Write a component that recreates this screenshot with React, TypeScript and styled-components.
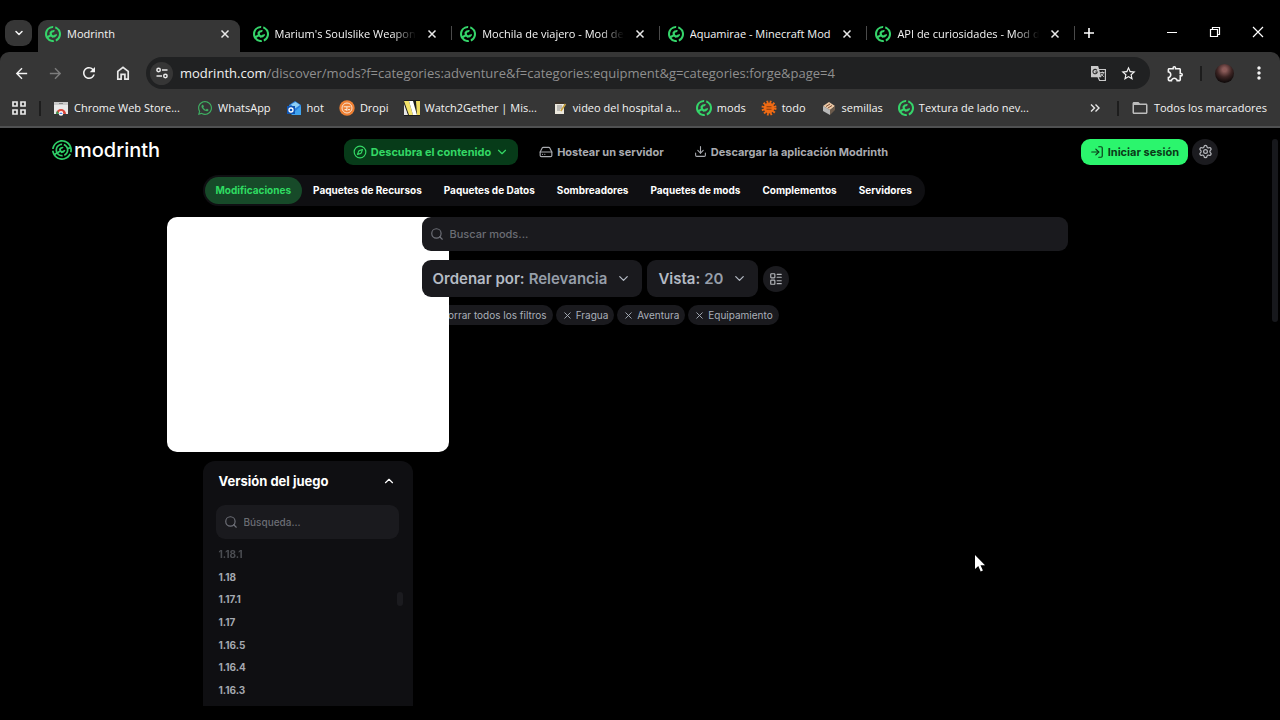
import React from "react";
import styled, { createGlobalStyle } from "styled-components";
import {
  ChevronDown,
  ChevronUp,
  Compass,
  Download,
  HardDrive,
  LayoutList,
  LogIn,
  Search,
  Settings,
  X,
} from "lucide-react";
import {
  MdArrowBack,
  MdArrowForward,
  MdRefresh,
  MdStarBorder,
  MdOutlineExtension,
  MdMoreVert,
  MdFolderOpen,
} from "react-icons/md";
import { FaWhatsapp } from "react-icons/fa";
import { SiModrinth } from "react-icons/si";

const GlobalStyle = createGlobalStyle`
  *, *::before, *::after { box-sizing: border-box; }
  body { margin: 0; background: #000; }
  button, input, select { font: inherit; color: inherit; }
  button { margin: 0; padding: 0; border: 0; background: none; cursor: pointer; }
  a { color: inherit; text-decoration: none; }
  svg { display: block; flex: none; }
  ul { list-style: none; margin: 0; padding: 0; }
`;

/* ---------- Browser window ---------- */

const Window = styled.div`
  display: flex;
  flex-direction: column;
  min-height: 100vh;
  background: #000;
`;

const Chrome = styled.div`
  font-family: "Open Sans", "Noto Sans", sans-serif;
  font-size: 11px;
  color: #f4f4f4;
`;

const TabStrip = styled.div`
  display: flex;
  align-items: flex-start;
  padding: 20px 0 0 5px;
  height: 52px;
`;

const TabSearch = styled.button`
  display: grid;
  place-items: center;
  flex: none;
  width: 27px;
  height: 26px;
  margin-right: 6px;
  border-radius: 9px;
  background: #363636;
`;

const Tabs = styled.div`
  display: flex;
  flex: 0 1 1038px;
  min-width: 0;
`;

const TabSlot = styled.div<{ $divider: boolean }>`
  display: flex;
  flex: 1 1 0;
  min-width: 0;
  &::after {
    content: "";
    flex: none;
    width: 1px;
    height: 14px;
    margin: 6px 1px 0 4px;
    background: ${(p) => (p.$divider ? "#4a4a4a" : "transparent")};
  }
`;

const TabBody = styled.div<{ $active: boolean }>`
  display: flex;
  flex: 1;
  align-items: center;
  gap: 6px;
  min-width: 0;
  height: 32px;
  padding: 0 9px 5px 7px;
  border-radius: 9px 9px 0 0;
  background: ${(p) => (p.$active ? "#363636" : "transparent")};
`;

const TabTitle = styled.span<{ $faded: boolean }>`
  flex: 1;
  min-width: 0;
  overflow: hidden;
  white-space: nowrap;
  line-height: 20px;
  mask-image: ${(p) =>
    p.$faded ? "linear-gradient(to right, #000 calc(100% - 28px), transparent calc(100% - 4px))" : "none"};
`;

const IconButton = styled.button<{ $size?: number }>`
  display: grid;
  place-items: center;
  flex: none;
  width: ${(p) => p.$size ?? 24}px;
  height: ${(p) => p.$size ?? 24}px;
`;

const WindowButtons = styled.div`
  display: flex;
  gap: 19px;
  margin-left: auto;
  padding-right: 10px;
`;

const Toolbar = styled.div`
  display: flex;
  align-items: center;
  height: 42px;
  padding: 0 9px;
  border-radius: 9px 9px 0 0;
  background: #363636;
`;

const NavButtons = styled.div`
  display: flex;
  gap: 10px;
  margin-right: 11px;
`;

const Omnibox = styled.div`
  display: flex;
  align-items: center;
  flex: 1;
  min-width: 0;
  height: 32px;
  padding: 0 10px 0 4px;
  border-radius: 16px;
  background: #202122;
`;

const SiteInfo = styled.button`
  display: grid;
  place-items: center;
  flex: none;
  width: 23px;
  height: 23px;
  margin-right: 7px;
  border-radius: 50%;
  background: #363636;
`;

const Url = styled.span`
  flex: 1;
  min-width: 0;
  overflow: hidden;
  white-space: nowrap;
  font-size: 13px;
  line-height: 20px;
  color: #8f8f8f;
  b { font-weight: 400; color: #f1f1f1; }
`;

const OmniboxActions = styled.div`
  display: flex;
  gap: 6px;
`;

const ToolbarActions = styled.div`
  display: flex;
  align-items: center;
  gap: 13px;
  margin-left: 13px;
`;

const Divider = styled.span`
  flex: none;
  width: 2px;
  height: 15px;
  background: #1d1d1d;
`;

const Avatar = styled.span`
  width: 19px;
  height: 19px;
  border-radius: 50%;
  background: radial-gradient(circle at 50% 30%, #8a5a58 0 12%, #3c2423 45%, #120c0c 75%);
`;

const Bookmarks = styled.div`
  display: flex;
  align-items: center;
  gap: 12px;
  height: 34px;
  padding: 0 13px 4px 11px;
  border-bottom: 2px solid #505152;
  background: #363636;
`;

const BookmarkList = styled.ul`
  display: flex;
  flex: 1;
  min-width: 0;
  gap: 15px;
`;

const Bookmark = styled.a<{ $elided?: boolean }>`
  display: flex;
  align-items: center;
  gap: 5px;
  min-width: ${(p) => (p.$elided ? 129 : 0)}px;
  white-space: nowrap;
  line-height: 20px;
`;

/* ---------- Modrinth page ---------- */

const Viewport = styled.div`
  display: flex;
  flex: 1;
  font-family: Inter, sans-serif;
  font-size: 11px;
  color: #b0bac5;
`;

const Page = styled.div`
  flex: 1;
  min-width: 0;
`;

const ScrollTrack = styled.div`
  flex: none;
  width: 10px;
  padding: 11px 2px;
`;

const ScrollThumb = styled.div`
  width: 6px;
  height: 183px;
  border-radius: 3px;
  background: #17181c;
`;

const Header = styled.header`
  display: flex;
  align-items: center;
  height: 47px;
  padding: 0 52px;
`;

const Brand = styled.a`
  display: flex;
  align-items: center;
  gap: 2px;
  padding-bottom: 4px;
  font-size: 20px;
  font-weight: 500;
  line-height: 24px;
  color: #fff;
`;

const SiteNav = styled.nav`
  display: flex;
  flex: 1;
  justify-content: center;
  gap: 12px;
`;

const NavItem = styled.button<{ $active?: boolean }>`
  display: flex;
  align-items: center;
  gap: 4px;
  height: 26px;
  padding: 0 9px;
  border-radius: 9px;
  font-weight: 700;
  white-space: nowrap;
  color: ${(p) => (p.$active ? "#34d765" : "#a9abb0")};
  background: ${(p) => (p.$active ? "#073b19" : "transparent")};
`;

const SignIn = styled.button`
  display: flex;
  align-items: center;
  gap: 4px;
  height: 26px;
  padding: 0 9px;
  margin-right: 4px;
  border-radius: 9px;
  font-weight: 700;
  white-space: nowrap;
  color: #0a3a18;
  background: #2bf56d;
`;

const RoundButton = styled.button`
  display: grid;
  place-items: center;
  flex: none;
  width: 26px;
  height: 26px;
  border-radius: 50%;
  color: #b4b6bb;
  background: #1b1b1f;
`;

const Content = styled.div`
  max-width: 865px;
  margin: 0 auto;
`;

const TypeNav = styled.nav`
  display: flex;
  width: fit-content;
  padding: 2px;
  border-radius: 16px;
  background: #0f0f12;
`;

const TypeLink = styled.a<{ $active?: boolean }>`
  padding: 0 11px;
  border-radius: 14px;
  font-size: 10px;
  font-weight: 700;
  line-height: 27px;
  white-space: nowrap;
  color: ${(p) => (p.$active ? "#2fdc62" : "#fff")};
  background: ${(p) => (p.$active ? "#174a29" : "transparent")};
`;

const Columns = styled.div`
  display: flex;
  gap: 9px;
  margin-top: 11px;
`;

const Sidebar = styled.aside`
  flex: none;
  width: 210px;
`;

/* The ad frame is wider than the sidebar and spills over both of its sides. */
const AdFrame = styled.div`
  position: relative;
  z-index: 1;
  height: 235px;
  margin: 0 -36px 9px;
  border-radius: 10px;
  background: #fff;
`;

const FilterCard = styled.section`
  padding: 0 14px 5px 13px;
  border-radius: 12px 12px 0 0;
  background: #0f0f12;
`;

const FilterToggle = styled.button`
  display: flex;
  align-items: center;
  justify-content: space-between;
  width: 100%;
  height: 44px;
  padding: 0 3px 4px;
  font-size: 13px;
  font-weight: 700;
  color: #fff;
`;

const SearchField = styled.label<{ $small?: boolean }>`
  position: relative;
  z-index: 2;
  display: flex;
  align-items: center;
  gap: 6px;
  height: 34px;
  padding: 0 8px;
  border-radius: 9px;
  font-size: ${(p) => (p.$small ? 10 : 11)}px;
  font-weight: 500;
  color: #6f7179;
  background: #1a1a1e;
  input {
    flex: 1;
    min-width: 0;
    padding: 0;
    border: 0;
    outline: 0;
    background: none;
  }
  input::placeholder { color: #6b6d74; opacity: 1; }
`;

const VersionArea = styled.div`
  display: flex;
  align-items: center;
  margin: 4px -4px 0 0;
`;

const VersionList = styled.ul`
  display: grid;
  grid-auto-rows: 1fr;
  flex: 1;
  height: 158px;
`;

const VersionButton = styled.button<{ $faded: boolean }>`
  display: flex;
  align-items: center;
  height: 100%;
  padding: 0 3px;
  font-size: 10px;
  font-weight: 700;
  color: #a4a8b0;
  opacity: ${(p) => (p.$faded ? 0.4 : 1)};
`;

const ListThumb = styled.div`
  width: 6px;
  height: 14px;
  margin-bottom: 46px;
  border-radius: 3px;
  background: #1b1b1f;
`;

const Results = styled.main`
  flex: 1;
  min-width: 0;
`;

const Controls = styled.div`
  position: relative;
  z-index: 2;
  display: flex;
  align-items: center;
  gap: 5px;
  width: fit-content;
  margin: 9px 0 8px;
`;

const SelectBox = styled.label`
  display: flex;
  align-items: center;
  gap: 4px;
  height: 37px;
  padding: 0 11px;
  border-radius: 9px;
  font-size: 15px;
  font-weight: 600;
  white-space: nowrap;
  color: #b4bac4;
  background: #1a1a1e;
  select {
    appearance: none;
    field-sizing: content;
    padding: 0;
    margin-right: 5px;
    border: 0;
    outline: 0;
    color: #969ea9;
    background: transparent;
  }
`;

const Chips = styled.div`
  display: flex;
  gap: 3px;
`;

const Chip = styled.button`
  display: flex;
  align-items: center;
  gap: 3px;
  height: 20px;
  padding: 0 6px;
  border-radius: 10px;
  font-size: 10px;
  white-space: nowrap;
  color: #aab0ba;
  background: #1a1a1e;
`;

const Pointer = styled.svg`
  position: absolute;
  left: 974px;
  top: 555px;
  z-index: 5;
  pointer-events: none;
`;

/* ---------- Icons ---------- */

const Favicon = () => <SiModrinth size={16} color="#35d46a" />;

const ModrinthLogo = () => (
  <svg width="20" height="20" viewBox="0 0 512 514" fill="#2fcf68">
    <path d="M503.16 323.56C514.55 281.47 515.32 235.91 503.2 190.76C466.57 54.23 326.04-26.8 189.33 9.78C83.81 38.02 11.39 128.07.69 230.47H43.99C54.29 147.33 113.74 74.73 199.75 51.71C306.05 23.26 415.13 80.67 453.17 181.38L411.03 192.65C391.64 145.8 352.57 111.45 306.3 96.82L298.56 140.66C335.09 154.13 364.72 184.5 375.56 224.91C391.36 283.8 361.94 344.14 308.56 369.17L320.09 412.16C390.25 383.21 432.4 310.3 422.43 235.14L464.41 223.91C468.91 252.62 467.35 281.16 460.55 308.07L503.16 323.56Z" />
    <path d="M321.99 504.22C185.27 540.8 44.75 459.77 8.11 323.24C3.84 307.31 1.17 291.33 0 275.46H43.27C44.36 287.37 46.47 299.35 49.68 311.29C53.04 323.8 57.45 335.75 62.79 347.07L101.38 323.92C98.13 316.42 95.39 308.6 93.21 300.47C69.17 210.87 122.41 118.77 212.13 94.76C229.13 90.21 246.23 88.44 262.93 89.15L255.19 133C244.73 133.05 234.11 134.42 223.53 137.25C157.31 154.98 118.01 222.95 135.75 289.09C136.85 293.16 138.13 297.13 139.59 300.99L188.94 271.38L174.07 231.95L220.67 184.08L279.57 171.39L296.62 192.38L269.47 219.88L245.79 227.33L228.87 244.72L237.16 267.79C237.16 267.79 253.95 285.63 253.98 285.64L277.7 279.33L294.58 260.79L331.44 249.12L342.42 273.82L304.39 320.45L240.66 340.63L212.08 308.81L162.26 338.7C187.8 367.78 226.2 383.93 266.01 380.56L277.54 423.55C218.13 431.41 160.1 406.82 124.05 361.64L85.64 384.68C136.25 451.17 223.84 484.11 309.61 461.16C371.35 444.64 419.4 402.56 445.42 349.38L488.06 364.88C457.17 431.16 398.22 483.82 321.99 504.22Z" />
  </svg>
);

const CloseIcon = () => (
  <svg width="10" height="10" viewBox="0 0 10 10" stroke="#e8e8e8" strokeWidth="1.5">
    <path d="M1.5 1.5l7 7M8.5 1.5l-7 7" />
  </svg>
);

const HomeIcon = () => (
  <svg width="16" height="16" viewBox="0 0 16 16" fill="none" stroke="#e8e8e8" strokeWidth="1.7">
    <path d="M2.8 6.4 8 2.3l5.2 4.1v7.7H9.9V9.4H6.1v4.7H2.8z" />
  </svg>
);

const TuneIcon = () => (
  <svg width="14" height="14" viewBox="0 0 14 14" fill="none" stroke="#e8e8e8" strokeWidth="1.5">
    <circle cx="3.6" cy="4" r="1.7" />
    <path d="M7 4h5.5M1.5 10H7" />
    <circle cx="10.4" cy="10" r="1.7" />
  </svg>
);

const TranslateIcon = () => (
  <svg width="17" height="17" viewBox="0 0 17 17" fill="none">
    <path d="M7 4.5h8.4v11H9.6L8 12" stroke="#c9c9c9" strokeWidth="1.2" />
    <path d="M1 1h7.2l3 11.2H1z" fill="#c9c9c9" />
    <path d="M7 5.4A2.2 2.2 0 1 0 7.3 7H5.3" stroke="#2b2b2b" strokeWidth="1.1" />
    <path d="M10.2 7.5h4.2M12.3 6.5v1M13.5 7.6c-.4 1.8-1.4 3-2.6 3.8M11 8.5c.6 1.4 1.6 2.4 2.8 3.2" stroke="#c9c9c9" />
  </svg>
);

const AppsIcon = () => (
  <svg width="16" height="16" viewBox="0 0 16 16" fill="none" stroke="#e8e8e8" strokeWidth="1.7">
    <path d="M2 2h4v4H2zM10 2h4v4h-4zM2 10h4v4H2zM10 10h4v4h-4z" />
  </svg>
);

const StoreIcon = () => (
  <svg width="16" height="16" viewBox="0 0 16 16">
    <path d="M1 2h14v12H1z" fill="#e9e9e9" />
    <path d="M1 2h14v3H1z" fill="#c9c9c9" />
    <path d="M3 14a5 5 0 0 1 10 0z" fill="#d9473b" />
    <path d="M3 14a5 5 0 0 1 1.2-3.2L6.5 14z" fill="#3c9a53" />
    <circle cx="8" cy="13.4" r="2.3" fill="#fff" />
    <path d="M6.4 14a1.6 1.6 0 0 1 3.2 0z" fill="#4a7fe0" />
    <path d="M6 3.5h4" stroke="#888" />
  </svg>
);

const OutlookIcon = () => (
  <svg width="16" height="16" viewBox="0 0 16 16">
    <path d="M3 5 9 1l6 4v9H3z" fill="#2a7fdc" />
    <path d="M5 4.5 9.5 2 14 5 9 8.5z" fill="#8fd0f5" />
    <path d="M15 6v9H5z" fill="#3fa3ef" />
    <path d="M1 6h8v8H1z" fill="#0f55b4" />
    <circle cx="5" cy="10" r="2" fill="none" stroke="#fff" strokeWidth="1.3" />
  </svg>
);

const DropiIcon = () => (
  <svg width="16" height="16" viewBox="0 0 16 16" fill="none">
    <circle cx="8" cy="8" r="7.7" fill="#ee8034" />
    <circle cx="8" cy="8" r="5" stroke="#fbe3d0" strokeWidth="1" />
    <path d="M4.6 6.8h6.8M5.5 9.6h2M9 9.6h2M7.9 7v4" stroke="#fbe3d0" strokeWidth="1.1" />
  </svg>
);

const W2gIcon = () => (
  <svg width="16" height="16" viewBox="0 0 16 16">
    <path d="M0 0h16v16H0z" fill="#1c1c1c" />
    <path d="M0 1h5l4 14H5z" fill="#f3e36a" />
    <path d="M5 1h4l4 14H9z" fill="#fff" />
    <path d="M12 1h4v14h-3z" fill="#f0dc62" />
    <path d="M0 4l4 11H0z" fill="#e8e8e8" />
  </svg>
);

const NoteIcon = () => (
  <svg width="16" height="16" viewBox="0 0 16 16">
    <path d="M3 3h9v11H3z" fill="#ece8de" />
    <path d="M3 2h9v2H3z" fill="#3a3128" />
    <path d="M5 6h5M5 8h5M5 10h3" stroke="#8c8c8c" />
    <path d="M13.5 4 8.8 11" stroke="#c9a23e" strokeWidth="1.6" />
  </svg>
);

const GearBadge = () => (
  <svg width="16" height="16" viewBox="0 0 16 16">
    <circle cx="8" cy="8" r="6" fill="none" stroke="#ee6a14" strokeWidth="3" strokeDasharray="1.7 1.44" />
    <circle cx="8" cy="8" r="5.4" fill="#ee6a14" />
    <path d="M5.500 6.800h5M5.500 9.200h5" stroke="#8a3a0a" strokeWidth="1.1" />
  </svg>
);

const SeedsIcon = () => (
  <svg width="16" height="16" viewBox="0 0 16 16">
    <path d="M2 6 8 2l6 4-5 4z" fill="#ecc9a6" />
    <path d="M2 6v5l7 4v-5z" fill="#b9b9b9" />
    <path d="M14 6v4l-5 5v-5z" fill="#6b5a4b" />
    <path d="M5 6.5 9 4M7 8l4-2.5" stroke="#7c4d34" />
  </svg>
);

/* ---------- Data ---------- */

const tabs = [
  { title: "Modrinth", faded: false },
  { title: "Marium's Soulslike Weaponry", faded: true },
  { title: "Mochila de viajero - Mod de", faded: true },
  { title: "Aquamirae - Minecraft Mod", faded: false },
  { title: "API de curiosidades - Mod de", faded: true },
];

const bookmarks = [
  { label: "Chrome Web Store...", icon: <StoreIcon /> },
  { label: "WhatsApp", icon: <FaWhatsapp size={16} color="#3fae62" /> },
  { label: "hot", icon: <OutlookIcon /> },
  { label: "Dropi", icon: <DropiIcon /> },
  { label: "Watch2Gether | Mis...", icon: <W2gIcon /> },
  { label: "video del hospital a...", icon: <NoteIcon /> },
  { label: "mods", icon: <Favicon /> },
  { label: "todo", icon: <GearBadge /> },
  { label: "semillas", icon: <SeedsIcon /> },
  { label: "Textura de lado nev...", icon: <Favicon /> },
];

const projectTypes = [
  "Modificaciones",
  "Paquetes de Recursos",
  "Paquetes de Datos",
  "Sombreadores",
  "Paquetes de mods",
  "Complementos",
  "Servidores",
];

const versions = ["1.18.1", "1.18", "1.17.1", "1.17", "1.16.5", "1.16.4", "1.16.3"];

const filters = ["Borrar todos los filtros", "Fragua", "Aventura", "Equipamiento"];

/* ---------- App ---------- */

const BrowserChrome = () => (
  <Chrome>
    <TabStrip>
      <TabSearch aria-label="Buscar pestañas">
        <ChevronDown size={12} strokeWidth={3} />
      </TabSearch>
      <Tabs>
        {tabs.map((tab, i) => (
          <TabSlot key={tab.title} $divider={i > 0}>
            <TabBody $active={i === 0}>
              <Favicon />
              <TabTitle $faded={tab.faded}>{tab.title}</TabTitle>
              <IconButton $size={12} aria-label="Cerrar pestaña">
                <CloseIcon />
              </IconButton>
            </TabBody>
          </TabSlot>
        ))}
      </Tabs>
      <IconButton $size={26} aria-label="Nueva pestaña">
        <svg width="12" height="12" viewBox="0 0 12 12" stroke="#fff" strokeWidth="1.6">
          <path d="M6 1v10M1 6h10" />
        </svg>
      </IconButton>
      <WindowButtons>
        <IconButton aria-label="Minimizar">
          <svg width="12" height="12" viewBox="0 0 12 12" stroke="#fff">
            <path d="M1 6.5h10" />
          </svg>
        </IconButton>
        <IconButton aria-label="Restaurar">
          <svg width="12" height="12" viewBox="0 0 12 12" fill="none" stroke="#fff" strokeWidth="1.2">
            <path d="M1.5 3.5h7v7h-7zM3.5 3.5v-2h7v7h-2" />
          </svg>
        </IconButton>
        <IconButton aria-label="Cerrar">
          <svg width="12" height="12" viewBox="0 0 12 12" stroke="#fff" strokeWidth="1.2">
            <path d="M1 1l10 10M11 1 1 11" />
          </svg>
        </IconButton>
      </WindowButtons>
    </TabStrip>
    <Toolbar>
      <NavButtons>
        <IconButton aria-label="Atrás">
          <MdArrowBack size={17} />
        </IconButton>
        <IconButton aria-label="Adelante">
          <MdArrowForward size={17} color="#7c7c7c" />
        </IconButton>
        <IconButton aria-label="Recargar">
          <MdRefresh size={18} />
        </IconButton>
        <IconButton aria-label="Inicio">
          <HomeIcon />
        </IconButton>
      </NavButtons>
      <Omnibox>
        <SiteInfo aria-label="Información del sitio">
          <TuneIcon />
        </SiteInfo>
        <Url>
          <b>modrinth.com</b>/discover/mods?f=categories:adventure&amp;f=categories:equipment&amp;g=categories:forge&amp;page=4
        </Url>
        <OmniboxActions>
          <IconButton aria-label="Traducir">
            <TranslateIcon />
          </IconButton>
          <IconButton aria-label="Añadir a marcadores">
            <MdStarBorder size={17} />
          </IconButton>
        </OmniboxActions>
      </Omnibox>
      <ToolbarActions>
        <IconButton aria-label="Extensiones">
          <MdOutlineExtension size={19} />
        </IconButton>
        <Divider />
        <Avatar />
        <IconButton aria-label="Menú">
          <MdMoreVert size={20} />
        </IconButton>
      </ToolbarActions>
    </Toolbar>
    <Bookmarks>
      <IconButton $size={16} aria-label="Aplicaciones">
        <AppsIcon />
      </IconButton>
      <Divider />
      <BookmarkList>
        {bookmarks.map((b) => (
          <li key={b.label}>
            <Bookmark href="#" $elided={b.label.endsWith("...")}>
              {b.icon}
              {b.label}
            </Bookmark>
          </li>
        ))}
      </BookmarkList>
      <IconButton $size={20} aria-label="Más marcadores">
        <svg width="10" height="10" viewBox="0 0 10 10" fill="none" stroke="#e8e8e8" strokeWidth="1.4">
          <path d="M1 1.5 4.5 5 1 8.5M5.5 1.5 9 5 5.5 8.5" />
        </svg>
      </IconButton>
      <Divider />
      <Bookmark href="#">
        <MdFolderOpen size={18} color="#bdbdbd" />
        Todos los marcadores
      </Bookmark>
    </Bookmarks>
  </Chrome>
);

export default function App() {
  return (
    <>
      <GlobalStyle />
      <Window>
        <BrowserChrome />
        <Viewport>
          <Page>
            <Header>
              <Brand href="#">
                <ModrinthLogo />
                modrinth
              </Brand>
              <SiteNav>
                <NavItem $active>
                  <Compass size={14} />
                  Descubra el contenido
                  <ChevronDown size={14} />
                </NavItem>
                <NavItem>
                  <HardDrive size={14} />
                  Hostear un servidor
                </NavItem>
                <NavItem>
                  <Download size={13} />
                  Descargar la aplicación Modrinth
                </NavItem>
              </SiteNav>
              <SignIn>
                <LogIn size={14} />
                Iniciar sesión
              </SignIn>
              <RoundButton aria-label="Configuración">
                <Settings size={15} />
              </RoundButton>
            </Header>
            <Content>
              <TypeNav>
                {projectTypes.map((name, i) => (
                  <TypeLink key={name} href="#" $active={i === 0}>
                    {name}
                  </TypeLink>
                ))}
              </TypeNav>
              <Columns>
                <Sidebar>
                  <AdFrame />
                  <FilterCard>
                    <FilterToggle aria-expanded>
                      Versión del juego
                      <ChevronUp size={14} />
                    </FilterToggle>
                    <SearchField $small>
                      <Search size={14} />
                      <input type="text" aria-label="Buscar versión" placeholder="Búsqueda..." />
                    </SearchField>
                    <VersionArea>
                      <VersionList>
                        {versions.map((v, i) => (
                          <li key={v}>
                            <VersionButton $faded={i === 0}>{v}</VersionButton>
                          </li>
                        ))}
                      </VersionList>
                      <ListThumb />
                    </VersionArea>
                  </FilterCard>
                </Sidebar>
                <Results>
                  <SearchField>
                    <Search size={14} />
                    <input type="text" aria-label="Buscar mods" placeholder="Buscar mods..." />
                  </SearchField>
                  <Controls>
                    <SelectBox>
                      Ordenar por:
                      <select defaultValue="Relevancia">
                        <option>Relevancia</option>
                      </select>
                      <ChevronDown size={15} />
                    </SelectBox>
                    <SelectBox>
                      Vista:
                      <select defaultValue="20">
                        <option>20</option>
                      </select>
                      <ChevronDown size={15} />
                    </SelectBox>
                    <RoundButton aria-label="Cambiar vista">
                      <LayoutList size={14} />
                    </RoundButton>
                  </Controls>
                  <Chips>
                    {filters.map((f) => (
                      <Chip key={f}>
                        <X size={11} />
                        {f}
                      </Chip>
                    ))}
                  </Chips>
                </Results>
              </Columns>
            </Content>
          </Page>
          <ScrollTrack>
            <ScrollThumb />
          </ScrollTrack>
        </Viewport>
      </Window>
      <Pointer width="12" height="18" viewBox="0 0 12 18">
        <path d="M1 0v14l3.3-3 2.4 5.5 2.2-1L6.5 10.2H11z" fill="#fff" />
      </Pointer>
    </>
  );
}
